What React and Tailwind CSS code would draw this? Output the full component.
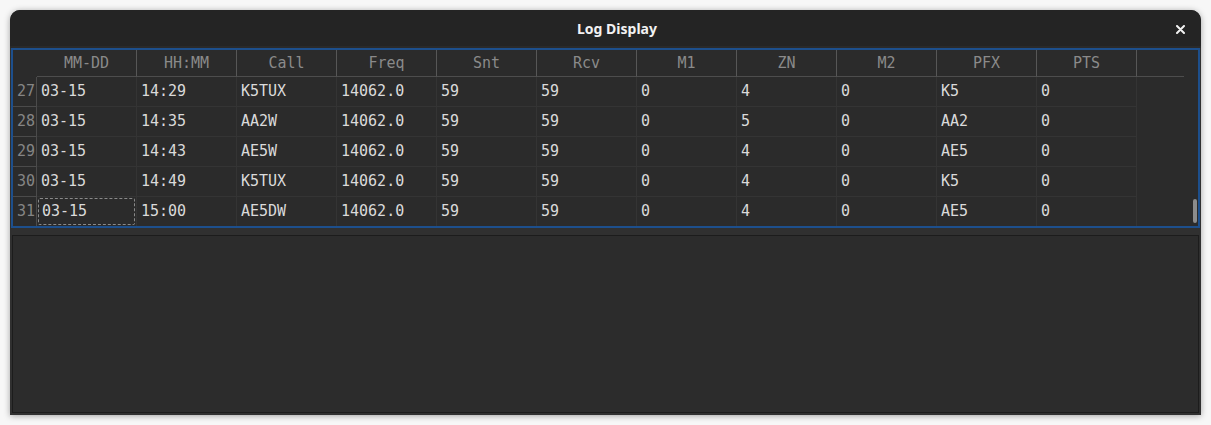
import React from "react";

const columns = ["MM-DD", "HH:MM", "Call", "Freq", "Snt", "Rcv", "M1", "ZN", "M2", "PFX", "PTS"];

const rows = [
  { n: 27, cells: ["03-15", "14:29", "K5TUX", "14062.0", "59", "59", "0", "4", "0", "K5", "0"] },
  { n: 28, cells: ["03-15", "14:35", "AA2W", "14062.0", "59", "59", "0", "5", "0", "AA2", "0"] },
  { n: 29, cells: ["03-15", "14:43", "AE5W", "14062.0", "59", "59", "0", "4", "0", "AE5", "0"] },
  { n: 30, cells: ["03-15", "14:49", "K5TUX", "14062.0", "59", "59", "0", "4", "0", "K5", "0"] },
  { n: 31, cells: ["03-15", "15:00", "AE5DW", "14062.0", "59", "59", "0", "4", "0", "AE5", "0"] },
];

const LogTable = () => {
  return (
    <div className="ml-[1px] h-[180px] w-[1189px] border-2 border-[#1d4f8c] bg-[#2b2b2b] flex overflow-hidden font-['DejaVu_Sans_Mono',monospace] text-[15px]">
      <div className="flex flex-col w-[1171px]">
        {/* header */}
        <div className="flex h-[27px] shrink-0">
          <div className="w-[24px] shrink-0" />
          {columns.map((c) => (
            <div
              key={c}
              className="w-[100px] shrink-0 border-r border-b border-r-[#575757] border-b-[#4d4d4d] flex items-center justify-center text-[#8a8a8a]"
            >
              {c}
            </div>
          ))}
          <div className="w-[47px] shrink-0 border-b border-[#4d4d4d]" />
        </div>

        {/* rows */}
        {rows.map((row, i) => (
          <div key={row.n} className="flex h-[30px] shrink-0">
            <div className="w-[24px] shrink-0 border-r border-b border-[#4b4b4b] flex items-center justify-end pr-[1px] text-[#858585]">
              {row.n}
            </div>
            {row.cells.map((cell, j) => (
              <div
                key={j}
                className="w-[100px] shrink-0 border-r border-b border-[#343434] flex items-center text-[#dadada] p-[1px]"
              >
                {i === rows.length - 1 && j === 0 ? (
                  <div className="w-full h-full border border-dashed border-[#8a8a8a] rounded-[2px] flex items-center pl-[3px]">
                    {cell}
                  </div>
                ) : (
                  <span className="pl-[3px]">{cell}</span>
                )}
              </div>
            ))}
            <div className="w-[47px] shrink-0" />
          </div>
        ))}
      </div>

      {/* scrollbar */}
      <div className="w-[14px] shrink-0 flex flex-col justify-end items-end pr-[1px] pb-[3px]">
        <div className="w-[4px] h-[24px] rounded-full bg-[#8c8c8c]" />
      </div>
    </div>
  );
};

const App = () => {
  return (
    <div className="w-[1211px] h-[425px] bg-[#f7f7f7] pt-[10px] pl-[10px]">
      <div className="w-[1191px] h-[405px] rounded-t-[10px] bg-[#303030] shadow-[0_1px_6px_rgba(0,0,0,0.35)] flex flex-col overflow-hidden">
        <div className="h-[36px] shrink-0 bg-[#242424] flex items-center justify-center pl-[23px] relative">
          <span className="font-['Noto_Sans',sans-serif] font-bold text-[14px] text-[#f2f2f2]">Log Display</span>
          <button className="absolute right-[16px] top-[14px] w-[10px] h-[10px] flex items-center justify-center">
            <svg width="9" height="9" viewBox="0 0 9 9">
              <path d="M1 1 L8 8 M8 1 L1 8" stroke="#f2f2f2" strokeWidth="2" strokeLinecap="round" />
            </svg>
          </button>
        </div>
        <div className="h-[2px] shrink-0 bg-[#2a2a2a]" />

        <LogTable />

        <div className="h-[7px] shrink-0" />
        <div className="mx-[2px] h-[178px] shrink-0 border border-[#1c1c1c] bg-[#2c2c2c]" />
      </div>
    </div>
  );
};

export default App;
